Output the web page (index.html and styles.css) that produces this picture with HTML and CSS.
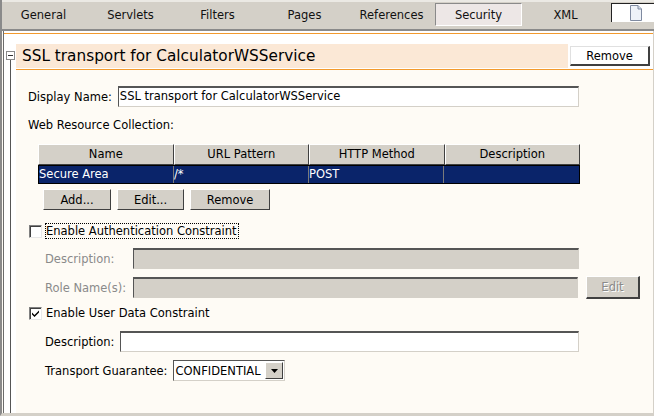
FILE: index.html
```html
<!DOCTYPE html>
<html>
<head>
<meta charset="utf-8">
<link rel="stylesheet" href="styles.css">
</head>
<body>
<div class="window">
  <div class="tabbar">
    <div class="tabs">
      <div class="tab">General</div>
      <div class="tab">Servlets</div>
      <div class="tab">Filters</div>
      <div class="tab">Pages</div>
      <div class="tab">References</div>
      <div class="tab selected">Security</div>
      <div class="tab">XML</div>
    </div>
    <div class="filebox">
      <svg width="12" height="16" viewBox="0 0 12 16">
        <path d="M0.5 0.5 H8 L11.5 4 V15.5 H0.5 Z" fill="#eef2f8" stroke="#7f8aa0"/>
        <path d="M8 0.5 V4 H11.5" fill="#d6dcea" stroke="#7f8aa0"/>
      </svg>
    </div>
  </div>
  <div class="panel">
    <div class="tree">
      <div class="expander"><span class="minus"></span></div>
      <div class="treeline"></div>
    </div>
    <div class="section">
      <div class="head">
        <div class="title">SSL transport for CalculatorWSService</div>
        <button class="btn-white">Remove</button>
      </div>
      <div class="form">
        <div class="row name-row">
          <span class="label">Display Name:</span>
          <div class="input wide">SSL transport for CalculatorWSService</div>
        </div>
        <div class="caption">Web Resource Collection:</div>
        <div class="table">
          <div class="thead">
            <div class="th">Name</div>
            <div class="th">URL Pattern</div>
            <div class="th">HTTP Method</div>
            <div class="th">Description</div>
          </div>
          <div class="trow">
            <div class="td">Secure Area</div>
            <div class="td">/*</div>
            <div class="td">POST</div>
            <div class="td"></div>
          </div>
        </div>
        <div class="buttons">
          <button class="btn b-add">Add...</button>
          <button class="btn b-edit">Edit...</button>
          <button class="btn b-remove">Remove</button>
        </div>
        <div class="check-row first">
          <span class="checkbox"></span>
          <span class="focus">Enable Authentication Constraint</span>
        </div>
        <div class="row sub disabled">
          <span class="label fixed">Description:</span>
          <div class="input grey"></div>
        </div>
        <div class="row sub disabled role">
          <span class="label fixed">Role Name(s):</span>
          <div class="input grey"></div>
          <button class="btn b-disabled">Edit</button>
        </div>
        <div class="check-row second">
          <span class="checkbox">
            <svg width="9" height="9" viewBox="0 0 9 9"><path d="M1 3.5 L3.5 6 L8 1.5 V3.5 L3.5 8 L1 5.5 Z" fill="#000"/></svg>
          </span>
          <span>Enable User Data Constraint</span>
        </div>
        <div class="row sub desc2">
          <span class="label">Description:</span>
          <div class="input wide"></div>
        </div>
        <div class="row sub transport">
          <span class="label">Transport Guarantee:</span>
          <div class="select">
            <span class="sel-text">CONFIDENTIAL</span>
            <span class="sel-btn"><svg width="7" height="4" viewBox="0 0 7 4"><path d="M0 0 H7 L3.5 4 Z" fill="#000"/></svg></span>
          </div>
        </div>
      </div>
    </div>
  </div>
</div>
</body>
</html>
```

FILE: styles.css
```css
* { box-sizing: border-box; }
html, body { margin: 0; padding: 0; }
body {
  width: 654px;
  height: 416px;
  overflow: hidden;
  font-family: "DejaVu Sans", Verdana, sans-serif;
  font-size: 11.5px;
  color: #000;
  background: #fefbf5;
}
.window {
  width: 654px;
  height: 416px;
  display: flex;
  flex-direction: column;
  border-left: 2px solid #8a8a8a;
  border-bottom: 3px solid #d4d0c8;
}
.tabbar {
  height: 31px;
  flex: none;
  background: #d4d0c8;
  border-top: 2px solid #ebe9e4;
  border-bottom: 2px solid #8a8a8a;
  display: flex;
  align-items: flex-start;
}
.tabs { display: flex; margin-left: -2px; padding-top: 1px; }
.tab {
  width: 87px;
  height: 23px;
  line-height: 22px;
  text-align: center;
  color: #111;
  border: 1px solid transparent;
}
.tab.selected {
  background: #ede7e6;
  border-color: #8a8a8a #fff #fff #8a8a8a;
}
.filebox {
  margin-left: 2px;
  margin-top: 1px;
  width: 50px;
  height: 19px;
  background: #fff;
  border-top: 1px solid #222;
  border-left: 1px solid #222;
  display: flex;
  justify-content: center;
  padding-top: 1px;
  padding-left: 6px;
}
.panel {
  flex: 1;
  display: flex;
  border-left: 1px solid #6c6c6c;
  margin-left: 1px;
  border-right: 1px solid #d4d0c8;
  background: #fff;
  padding-top: 2px;
}
.tree {
  width: 12px;
  flex: none;
  display: flex;
  flex-direction: column;
  align-items: center;
  padding-top: 18px;
}
.expander {
  width: 9px;
  height: 9px;
  border: 1px solid #8a8a8a;
  background: #fff;
  display: flex;
  align-items: center;
  justify-content: center;
}
.minus { width: 5px; height: 1px; background: #333; }
.treeline { width: 1px; flex: 1; background: #555; }
.section {
  flex: 1;
  display: flex;
  flex-direction: column;
  border-top: 1px solid #f29a2e;
  margin-left: -12px;
  padding-left: 12px;
}
.head {
  display: flex;
  align-items: flex-start;
  padding-top: 10px;
  background: #fff;
  height: 36px;
  border-bottom: 1px solid #f29a2e;
}
.title {
  width: 552px;
  height: 24px;
  background: #fbe8d6;
  font-size: 15.3px;
  line-height: 24px;
  padding-left: 6px;
}
.btn-white {
  margin-left: 2px;
  margin-top: 2px;
  width: 80px;
  height: 20px;
  background: #fff;
  font: inherit;
  color: #000;
  border: 1px solid;
  border-color: #e0e0e0 #404040 #404040 #e0e0e0;
  border-right-width: 2px;
  border-bottom-width: 2px;
  padding: 0;
}
.form {
  flex: 1;
  background: #fefbf5;
  padding-left: 12px;
  display: flex;
  flex-direction: column;
}
.row { display: flex; align-items: center; }
.name-row { margin-top: 16px; }
.label { white-space: nowrap; margin-right: 6px; }
.label.fixed { width: 88px; margin-right: 0; }
.input {
  height: 21px;
  background: #fff;
  border: 1px solid;
  border-color: #555 #d4d0c8 #d4d0c8 #555;
  border-top-width: 2px;
  line-height: 17px;
  padding-left: 1px;
  white-space: nowrap;
}
.input.wide { flex: 1; margin-right: 74px; }
.input.grey { background: #d4d0c8; flex: 1; margin-right: 74px; }
.caption { margin-top: 10px; height: 16px; line-height: 16px; }
.table {
  margin-top: 11px;
  margin-left: 10px;
  width: 542px;
  display: flex;
  flex-direction: column;
}
.thead { display: flex; height: 21px; }
.th {
  width: 135.5px;
  background: #d4d0c8;
  text-align: center;
  line-height: 19px;
  border: 1px solid;
  border-color: #fff #404040 #404040 #fff;
}
.trow {
  display: flex;
  height: 19px;
  background: #0a246a;
  border: 1px solid #000;
  color: #fff;
}
.td {
  width: 135.5px;
  line-height: 16px;
  border-right: 1px solid #7a7a7a;
  white-space: nowrap;
}
.td:last-child { border-right: none; }
.buttons { display: flex; margin-top: 5px; margin-left: 15px; gap: 6px; }
.btn {
  height: 21px;
  background: #d4d0c8;
  font: inherit;
  color: #000;
  border: 1px solid;
  border-color: #fff #404040 #404040 #fff;
  padding: 0;
}
.b-add { width: 68px; }
.b-edit { width: 67px; }
.b-remove { width: 80px; }
.check-row { display: flex; align-items: center; height: 16px; }
.check-row.first { margin-top: 13px; }
.check-row.second { margin-top: 6px; }
.checkbox {
  width: 13px;
  height: 13px;
  background: #fff;
  border: 1px solid;
  border-color: #808080 #e8e8e8 #e8e8e8 #808080;
  margin-left: 1px;
  margin-right: 4px;
  display: flex;
  align-items: center;
  justify-content: center;
  box-shadow: inset 1px 1px 0 #404040;
}
.focus { outline: 1px dotted #000; line-height: 14px; padding-right: 1px; }
.sub { padding-left: 17px; }
.disabled .label { color: #8a8a8a; }
.row.disabled { margin-top: 9px; }
.row.role { margin-top: 7px; }
.row.role .input.grey { margin-right: 0; }
.b-disabled {
  width: 54px;
  height: 23px;
  margin-left: 8px;
  margin-right: 13px;
  color: #8a8a8a;
  text-shadow: 1px 1px 0 #fff;
  border-right-width: 2px;
  border-bottom-width: 2px;
}
.desc2 { margin-top: 10px; }
.transport { margin-top: 8px; }
.select {
  width: 112px;
  height: 21px;
  background: #fff;
  border: 1px solid;
  border-color: #555 #d4d0c8 #d4d0c8 #555;
  display: flex;
  align-items: center;
  padding-left: 1px;
}
.sel-text { flex: 1; white-space: nowrap; }
.sel-btn {
  width: 18px;
  height: 17px;
  background: #d4d0c8;
  border: 1px solid;
  border-color: #fff #404040 #404040 #fff;
  display: flex;
  align-items: center;
  justify-content: center;
  margin-right: 1px;
}
```
